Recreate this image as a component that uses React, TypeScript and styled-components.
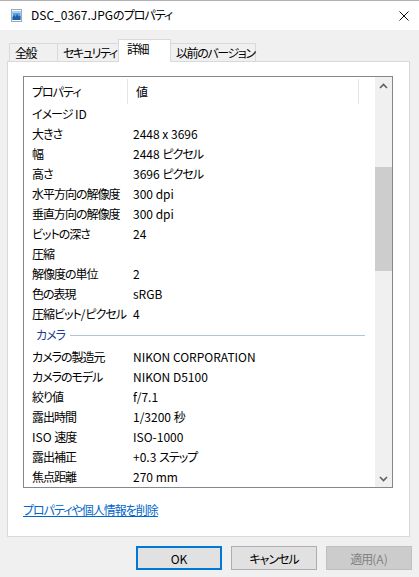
import React from "react";
import styled, { createGlobalStyle } from "styled-components";

const Global = createGlobalStyle`
  html, body { margin: 0; padding: 0; background: #f0f0f0; }
  body {
    font-family: "Noto Sans CJK JP", sans-serif;
    font-size: 12px;
    color: #000;
    font-feature-settings: "palt" 1;
  }
  * { box-sizing: border-box; }
`;

const Ja = styled.span`
  letter-spacing: -1px;
`;

const J = ({ t }: { t: string }) => (
  <>
    {t.split(/([\u3000-\u9fff\uff00-\uffef]+)/).map((part, i) =>
      /[\u3000-\u9fff\uff00-\uffef]/.test(part) ? <Ja key={i}>{part}</Ja> : part
    )}
  </>
);

const Window = styled.div`
  width: 419px;
  height: 577px;
  background: #f0f0f0;
  border-top: 1px solid #b0b0b0;
  display: flex;
  flex-direction: column;
  overflow: hidden;
`;

const TitleBar = styled.div`
  height: 29px;
  background: #fff;
  display: flex;
  align-items: center;
  padding-left: 11px;
  padding-right: 10px;
`;

const TitleText = styled.div`
  margin-left: 9px;
  flex: 1;
  font-size: 12px;
  line-height: 14px;
  padding-bottom: 1px;
  white-space: nowrap;
`;

const CloseBtn = styled.div`
  width: 10px;
  height: 10px;
  display: flex;
`;

const TabRow = styled.div`
  display: flex;
  align-items: flex-end;
  margin-top: 9px;
  padding-left: 9px;
  height: 23px;
  position: relative;
  z-index: 1;
`;

const Tab = styled.div<{ $w: number; $active?: boolean }>`
  width: ${(p) => p.$w}px;
  height: ${(p) => (p.$active ? 23 : 19)}px;
  border: 1px solid #d9d9d9;
  border-bottom: ${(p) => (p.$active ? "none" : "1px solid #d9d9d9")};
  margin-left: -1px;
  background: ${(p) => (p.$active ? "#fff" : "#f0f0f0")};
  display: flex;
  align-items: ${(p) => (p.$active ? "flex-start" : "center")};
  padding-top: ${(p) => (p.$active ? "1px" : "0")};
  padding-left: ${(p) => (p.$active ? 8 : 5)}px;
  font-size: 12px;
  line-height: 16px;
  white-space: nowrap;
  &:first-child { margin-left: 0; }
  ${Ja} { letter-spacing: -1.4px; }
`;

const Panel = styled.div`
  margin: -1px 9px 0 7px;
  height: 476px;
  background: #fff;
  border: 1px solid #d9d9d9;
  display: flex;
  flex-direction: column;
  padding: 14px 16px 0 15px;
`;

const List = styled.div`
  height: 412px;
  border: 1px solid #828790;
  display: flex;
  overflow: hidden;
`;

const ListBody = styled.div`
  flex: 1;
  display: flex;
  flex-direction: column;
  overflow: hidden;
`;

const HeaderRow = styled.div`
  height: 27px;
  flex: none;
  display: flex;
  align-items: center;
`;

const HeaderCell = styled.div<{ $w: number }>`
  width: ${(p) => p.$w}px;
  flex: none;
  height: 25px;
  display: flex;
  align-items: center;
  padding-left: 8px;
  border-right: 1px solid #e5e5e5;
  margin-top: 1px;
  white-space: nowrap;
`;

const Row = styled.div`
  height: 20px;
  flex: none;
  display: flex;
  align-items: center;
  white-space: nowrap;
`;

const Cell = styled.div<{ $w?: number }>`
  width: ${(p) => (p.$w ? `${p.$w}px` : "auto")};
  flex: none;
  padding-left: 8px;
  line-height: 16px;
`;

const GroupRow = styled.div`
  height: 23px;
  flex: none;
  display: flex;
  align-items: center;
  padding-left: 12px;
  padding-right: 10px;
  padding-bottom: 1px;
`;

const GroupLabel = styled.div`
  color: #1e3a96;
  line-height: 16px;
`;

const GroupLine = styled.div`
  flex: 1;
  height: 1px;
  margin-left: 5px;
  background: #b4c3dc;
`;

const Scrollbar = styled.div`
  width: 17px;
  flex: none;
  background: #f0f0f0;
  display: flex;
  flex-direction: column;
`;

const ArrowBtn = styled.div`
  height: 17px;
  display: flex;
  align-items: center;
  justify-content: center;
  flex: none;
`;

const Track = styled.div`
  flex: 1;
  display: flex;
  flex-direction: column;
`;

const Thumb = styled.div`
  margin-top: 73px;
  height: 104px;
  background: #cdcdcd;
`;

const Link = styled.a`
  margin-top: 14px;
  color: #0066cc;
  text-decoration: underline;
  line-height: 16px;
  font-size: 12px;
  align-self: flex-start;
  cursor: pointer;
`;

const ButtonRow = styled.div`
  display: flex;
  justify-content: flex-end;
  gap: 9px;
  padding-right: 7px;
  margin-top: 9px;
`;

const Button = styled.div<{ $kind?: "default" | "disabled" }>`
  width: 86px;
  height: 24px;
  display: flex;
  align-items: center;
  justify-content: center;
  font-size: 12px;
  background: ${(p) => (p.$kind === "disabled" ? "#cccccc" : "#e1e1e1")};
  color: ${(p) => (p.$kind === "disabled" ? "#838383" : "#000")};
  border: ${(p) =>
    p.$kind === "default" ? "2px solid #0078d7" : p.$kind === "disabled" ? "1px solid #bfbfbf" : "1px solid #adadad"};
`;

const general: [string, string][] = [
  ["イメージ ID", ""],
  ["大きさ", "2448 x 3696"],
  ["幅", "2448 ピクセル"],
  ["高さ", "3696 ピクセル"],
  ["水平方向の解像度", "300 dpi"],
  ["垂直方向の解像度", "300 dpi"],
  ["ビットの深さ", "24"],
  ["圧縮", ""],
  ["解像度の単位", "2"],
  ["色の表現", "sRGB"],
  ["圧縮ビット/ピクセル", "4"],
];

const camera: [string, string][] = [
  ["カメラの製造元", "NIKON CORPORATION"],
  ["カメラのモデル", "NIKON D5100"],
  ["絞り値", "f/7.1"],
  ["露出時間", "1/3200 秒"],
  ["ISO 速度", "ISO-1000"],
  ["露出補正", "+0.3 ステップ"],
  ["焦点距離", "270 mm"],
];

const FileIcon = () => (
  <svg width="11" height="13" viewBox="0 0 11 13">
    <rect x="0.5" y="0.5" width="10" height="12" fill="#fff" stroke="#9aa8b8" />
    <rect x="1.5" y="2" width="8" height="9" fill="#5aa0e0" />
    <path d="M1.5 11 L1.5 8 L3 6 L4.5 8 L6 5 L7.5 7.5 L9.5 6.5 L9.5 11 Z" fill="#1f5fa8" />
    <rect x="1.5" y="2" width="8" height="2" fill="#a9d0f2" />
  </svg>
);

export default function App() {
  return (
    <>
      <Global />
      <Window>
        <TitleBar>
          <FileIcon />
          <TitleText><J t="DSC_0367.JPGのプロパティ" /></TitleText>
          <CloseBtn>
            <svg width="10" height="10" viewBox="0 0 10 10">
              <path d="M0.5 0.5 L9.5 9.5 M9.5 0.5 L0.5 9.5" stroke="#111" strokeWidth="1" />
            </svg>
          </CloseBtn>
        </TitleBar>
        <TabRow>
          <Tab $w={49}><J t="全般" /></Tab>
          <Tab $w={62}><J t="セキュリティ" /></Tab>
          <Tab $w={53} $active><J t="詳細" /></Tab>
          <Tab $w={86}><J t="以前のバージョン" /></Tab>
        </TabRow>
        <Panel>
          <List>
            <ListBody>
              <HeaderRow>
                <HeaderCell $w={104}><J t="プロパティ" /></HeaderCell>
                <HeaderCell $w={231}><J t="値" /></HeaderCell>
              </HeaderRow>
              {general.map(([k, v]) => (
                <Row key={k}>
                  <Cell $w={101}><J t={k} /></Cell>
                  <Cell><J t={v} /></Cell>
                </Row>
              ))}
              <GroupRow>
                <GroupLabel><J t="カメラ" /></GroupLabel>
                <GroupLine />
              </GroupRow>
              {camera.map(([k, v]) => (
                <Row key={k}>
                  <Cell $w={101}><J t={k} /></Cell>
                  <Cell><J t={v} /></Cell>
                </Row>
              ))}
            </ListBody>
            <Scrollbar>
              <ArrowBtn>
                <svg width="9" height="6" viewBox="0 0 9 6">
                  <path d="M1 5 L4.5 1.5 L8 5" stroke="#606060" strokeWidth="1.6" fill="none" />
                </svg>
              </ArrowBtn>
              <Track>
                <Thumb />
              </Track>
              <ArrowBtn>
                <svg width="9" height="6" viewBox="0 0 9 6">
                  <path d="M1 1 L4.5 4.5 L8 1" stroke="#606060" strokeWidth="1.6" fill="none" />
                </svg>
              </ArrowBtn>
            </Scrollbar>
          </List>
          <Link><J t="プロパティや個人情報を削除" /></Link>
        </Panel>
        <ButtonRow>
          <Button $kind="default">OK</Button>
          <Button><J t="キャンセル" /></Button>
          <Button $kind="disabled"><J t="適用" />(A)</Button>
        </ButtonRow>
      </Window>
    </>
  );
}
